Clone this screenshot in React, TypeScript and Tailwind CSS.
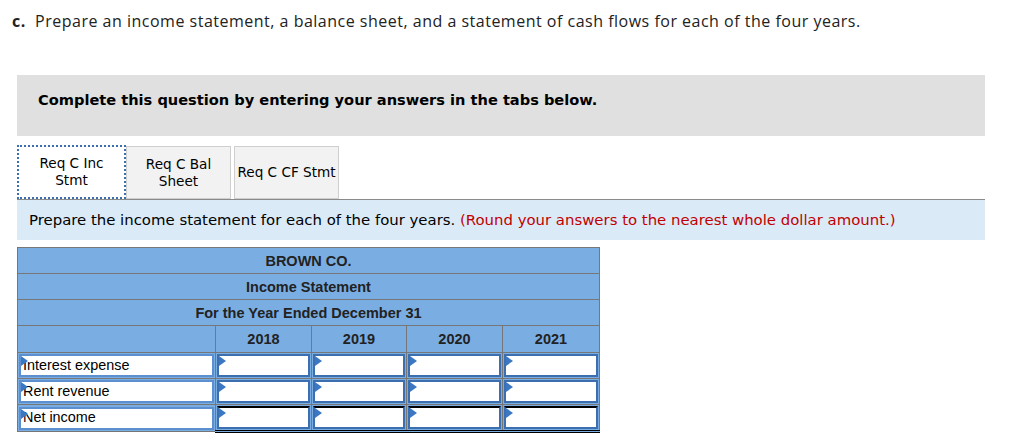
import React from 'react';

const years = ['2018', '2019', '2020', '2021'];
const rows = ['Interest expense', 'Rent revenue', 'Net income'];

function Flag() {
  return (
    <span className="absolute left-0 top-0 h-0 w-0 border-y-[5px] border-l-[7px] border-y-transparent border-l-[#3b78c4]" />
  );
}

export default function App() {
  return (
    <div className="h-[440px] w-[1024px] overflow-hidden bg-white">
      {/* Question */}
      <p
        className="pl-[12px] pt-[9px] text-[16px] tracking-[0.5px] text-[#222]"
        style={{ fontFamily: '"Open Sans", Lato, sans-serif' }}
      >
        <span className="font-bold">c.</span>&nbsp; Prepare an income statement, a balance sheet, and a statement of cash flows for each of the four years.
      </p>

      <div className="ml-[17px] mt-[42px] w-[968px]" style={{ fontFamily: '"DejaVu Sans", Verdana, sans-serif' }}>
        {/* Instructions box */}
        <div className="h-[61px] bg-[#e0e0e0] pl-[21px] pt-[15px] text-[14.6px] font-bold leading-[20px] text-black">
          Complete this question by entering your answers in the tabs below.
        </div>

        {/* Tabs */}
        <div className="mt-[9px] flex items-end text-[13.6px] leading-[17px] text-black">
          <div className="flex h-[54px] w-[109px] items-center justify-center border-2 border-dotted border-[#3b6fb0] bg-white text-center">
            Req C Inc
            <br />
            Stmt
          </div>
          <div className="flex h-[53px] w-[105px] items-center justify-center border border-[#cfcfcf] bg-[#f2f2f2] text-center">
            Req C Bal
            <br />
            Sheet
          </div>
          <div className="ml-[3px] flex h-[53px] w-[105px] items-center justify-center whitespace-nowrap border border-[#cfcfcf] bg-[#f2f2f2] text-center">
            Req C CF Stmt
          </div>
        </div>

        {/* Prompt bar */}
        <div className="flex h-[41px] items-center whitespace-nowrap border-t border-[#8a8a8a] bg-[#dbeaf7] pl-[12px] text-[14.9px] text-black">
          Prepare the income statement for each of the four years.&nbsp;
          <span className="text-[#c00000]">(Round your answers to the nearest whole dollar amount.)</span>
        </div>

        {/* Income statement */}
        <table
          className="mt-[7px] w-[582px] table-fixed border-collapse text-[14.5px] text-[#222]"
          style={{ fontFamily: '"Liberation Sans", Arial, sans-serif' }}
        >
          <colgroup>
            <col className="w-[198px]" />
            <col className="w-[96px]" />
            <col className="w-[95px]" />
            <col className="w-[96px]" />
            <col className="w-[97px]" />
          </colgroup>
          <tbody>
            {['BROWN CO.', 'Income Statement', 'For the Year Ended December 31'].map((t) => (
              <tr key={t} className="h-[26px]">
                <td colSpan={5} className="border border-[#777] bg-[#7aaee3] p-0 pt-[2px] text-center font-bold">
                  {t}
                </td>
              </tr>
            ))}
            <tr className="h-[27px]">
              <td className="border border-[#777] bg-[#7aaee3]" />
              {years.map((y) => (
                <td key={y} className="border border-[#777] bg-[#7aaee3] p-0 pt-[2px] text-center font-bold">
                  {y}
                </td>
              ))}
            </tr>
            {rows.map((r, i) => (
              <tr key={r}>
                <td className="border border-[#777] bg-[#7aaee3] p-px">
                  <div className="relative flex h-[23px] items-center border-2 border-[#5b8fd0] bg-white pl-[2px] text-[14.4px] text-black">
                    <Flag />
                    {r}
                  </div>
                </td>
                {years.map((y) => (
                  <td
                    key={y}
                    className={
                      i === 2
                        ? 'border border-b-[3px] border-[#777] border-b-black border-double bg-[#7aaee3] p-px'
                        : 'border border-[#777] bg-[#7aaee3] p-px'
                    }
                  >
                    <div
                      className={
                        i === 2
                          ? 'relative h-[23px] border-2 border-[#3b6fb0] border-t-black bg-white'
                          : 'relative h-[23px] border-2 border-[#3b6fb0] bg-white'
                      }
                    >
                      <Flag />
                    </div>
                  </td>
                ))}
              </tr>
            ))}
          </tbody>
        </table>
      </div>
    </div>
  );
}
